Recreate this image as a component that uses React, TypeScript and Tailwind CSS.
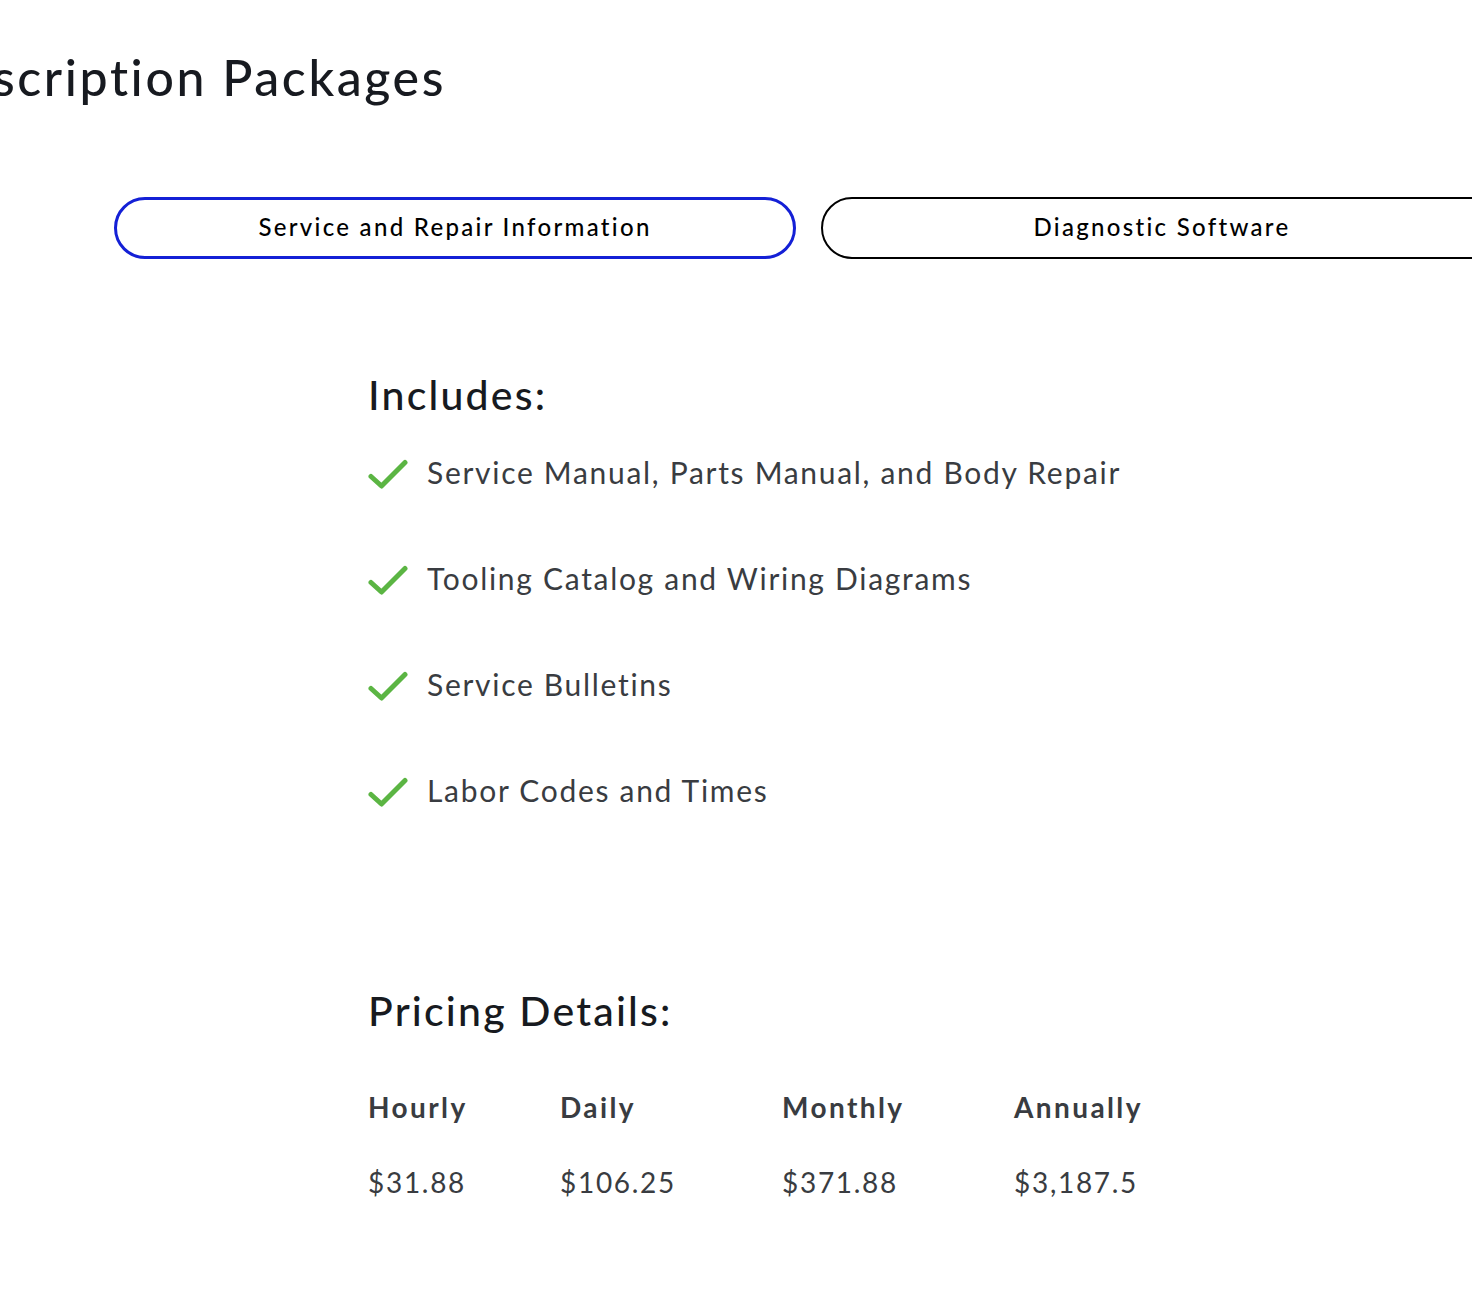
import { FC } from "react";

const font = { fontFamily: "Lato, 'Noto Sans', sans-serif" };

const CheckIcon: FC = () => (
  <svg
    width="40"
    height="30"
    viewBox="0 0 40 30"
    fill="none"
    className="mt-[8px] shrink-0"
  >
    <path
      d="M3 17.5 L13.5 27 L37 3.5"
      stroke="#5bb543"
      strokeWidth="5"
      strokeLinecap="round"
      strokeLinejoin="round"
    />
  </svg>
);

const includes = [
  "Service Manual, Parts Manual, and Body Repair",
  "Tooling Catalog and Wiring Diagrams",
  "Service Bulletins",
  "Labor Codes and Times",
];

const pricing = [
  { label: "Hourly", price: "$31.88" },
  { label: "Daily", price: "$106.25" },
  { label: "Monthly", price: "$371.88" },
  { label: "Annually", price: "$3,187.5" },
];

export default function App() {
  return (
    <div
      className="relative min-h-[1316px] w-[1472px] overflow-hidden bg-white"
      style={font}
    >
      <div className="flex w-[446px] justify-end pt-[45px]">
        <h1 className="whitespace-nowrap text-[50px] font-medium leading-[64px] tracking-[2.6px] text-[#171a20]">
          Subscription Packages
        </h1>
      </div>

      <div className="flex gap-[25px] pl-[114px] pt-[88px]">
        <button className="flex h-[62px] w-[682px] shrink-0 items-center justify-center rounded-full border-[3px] border-[#1420d6] pb-[2px] text-[24px] font-medium tracking-[2.3px] text-black">
          Service and Repair Information
        </button>
        <button className="flex h-[62px] w-[682px] shrink-0 items-center justify-center rounded-full border-2 border-black pb-[2px] text-[24px] font-medium tracking-[2.3px] text-black">
          Diagnostic Software
        </button>
      </div>

      <div className="pl-[368px] pt-[111px]">
        <h2 className="text-[41px] font-medium leading-[50px] tracking-[2.2px] text-[#171a20]">
          Includes:
        </h2>
        <ul className="mt-[31px] flex flex-col gap-[64px]">
          {includes.map((item) => (
            <li key={item} className="flex h-[42px] items-start gap-[19px]">
              <CheckIcon />
              <span className="text-[30px] leading-[42px] tracking-[1.7px] text-[#393c41]">
                {item}
              </span>
            </li>
          ))}
        </ul>

        <h2 className="mt-[175px] text-[41px] font-medium leading-[50px] tracking-[2.2px] text-[#171a20]">
          Pricing Details:
        </h2>
        <div className="mt-[53px] grid grid-cols-[192px_222px_232px_auto] gap-y-[39px]">
          {pricing.map((p) => (
            <div
              key={p.label}
              className="text-[28px] font-bold leading-[36px] tracking-[2.4px] text-[#393c41]"
            >
              {p.label}
            </div>
          ))}
          {pricing.map((p) => (
            <div
              key={p.price}
              className="text-[28px] leading-[36px] tracking-[1.7px] text-[#393c41]"
            >
              {p.price}
            </div>
          ))}
        </div>
      </div>
    </div>
  );
}
